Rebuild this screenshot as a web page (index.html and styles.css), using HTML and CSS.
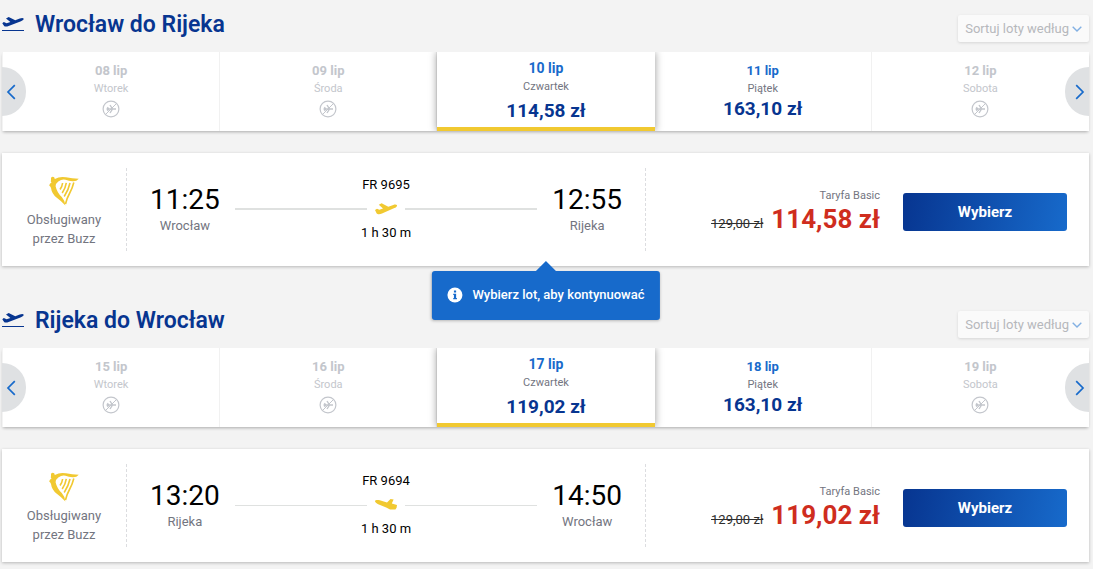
FILE: index.html
```html
<!DOCTYPE html>
<html lang="pl">
<head>
<meta charset="utf-8">
<meta name="viewport" content="width=device-width, initial-scale=1">
<title>Wybór lotów</title>
<link rel="stylesheet" href="styles.css">
</head>
<body>
<svg class="defs" aria-hidden="true">
  <symbol id="takeoff" viewBox="0 0 22 19">
    <path d="M.3 7.2 1.8 6.1 4.6 7.2 8.4 6.1 4 2.4 6.7 1 13.2 4.3 17.8 2.5C19.6 1.8 21.2 1.8 21.6 2.6S20.8 4.6 19 5.3L6.6 10.1C4.6 10.8 2.8 10.8 2.1 10Z"/>
    <path d="M0 14h22v1H0z"/>
  </symbol>
  <symbol id="plane" viewBox="0 0 22 12">
    <path d="M0 7 2 5.7 4.4 6.7 8 5.6 3.8 1.7 6.6.3 13.3 3.7 18.3 1.9C20 1.2 21.6 1.4 22 2.3S21 4.4 19.4 5.1L7 10.6C5 11.4 2.4 11.5 1.7 10.4Z"/>
  </symbol>
  <symbol id="plane-back" viewBox="0 0 22 12">
    <path d="M0 1.9C.4.8 2.8.8 4.8 1.3L12 3.4 15.5.1 18.6.4 16.8 4.5 22 6.1 21.6 8.7 20.4 10.5 15 10.6 11.2 8.4 3.2 5.2C1.2 4.3-.2 3 0 1.9Z"/>
  </symbol>
  <symbol id="no-flight" viewBox="0 0 18 18">
    <circle cx="9" cy="9" r="7.9" fill="none" stroke="currentColor" stroke-width="1.2"/>
    <path d="M3.5 14.5 14.5 3.5" stroke="currentColor"/>
    <path d="M4.5 9h9.5M8 5l2.5 4L8 13M5.3 7.2 6.8 9l-1.5 1.8" fill="none" stroke="currentColor" stroke-width="1.4"/>
  </symbol>
  <symbol id="chevron" viewBox="0 0 10 16">
    <path d="M1.2 1.2 8 8l-6.8 6.8" fill="none" stroke="currentColor" stroke-width="1.7"/>
  </symbol>
  <symbol id="chevron-down" viewBox="0 0 10 6">
    <path d="M.7.7 5 5 9.3.7" fill="none" stroke="currentColor" stroke-width="1.4"/>
  </symbol>
  <symbol id="harp" viewBox="0 0 30 30">
    <path d="M2 1.8Q3.5.1 5.2 1.3L5.8 3Q11 0 17 1.3T29.8 2.7Q27.3 5.6 23.5 5.2T16.5 3.7T9.3 5.4Q6.6 7.4 6.6 10.2 8 16.5 12.8 21 15.8 24.3 16.4 29.5 12 24.8 7.5 21.5 2.8 17.8 2 12 1.8 10.5.2 9.5.5 7.5 2.5 6.4 1.2 5 2 4.3Z"/>
    <path d="M11 13.5Q13.2 10.5 13.6 7M13.2 17Q16.5 12 17.3 6.8M15.2 20.5Q19.5 14 21 7M16.5 28Q17.5 23 20.5 17.5T24.8 6.5" fill="none" stroke="currentColor" stroke-width="1.6"/>
  </symbol>
</svg>

<main class="page">
  <section class="journey">
    <header class="journey-head">
      <h2 class="journey-title"><svg class="title-icon" aria-hidden="true"><use href="#takeoff"/></svg>Wrocław do Rijeka</h2>
      <button class="sort" type="button">Sortuj loty według<svg class="sort-icon" aria-hidden="true"><use href="#chevron-down"/></svg></button>
    </header>
    <div class="carousel">
      <div class="days">
        <button class="day" type="button" disabled><span class="date">08 lip</span><span class="weekday">Wtorek</span><svg class="none-icon" aria-hidden="true"><use href="#no-flight"/></svg></button>
        <button class="day" type="button" disabled><span class="date">09 lip</span><span class="weekday">Środa</span><svg class="none-icon" aria-hidden="true"><use href="#no-flight"/></svg></button>
        <button class="day selected" type="button" aria-pressed="true"><span class="date">10 lip</span><span class="weekday">Czwartek</span><span class="day-price">114,58 zł</span></button>
        <button class="day" type="button"><span class="date">11 lip</span><span class="weekday">Piątek</span><span class="day-price">163,10 zł</span></button>
        <button class="day" type="button" disabled><span class="date">12 lip</span><span class="weekday">Sobota</span><svg class="none-icon" aria-hidden="true"><use href="#no-flight"/></svg></button>
      </div>
      <button class="arrow prev" type="button" aria-label="Poprzednie dni"><svg class="arrow-icon" aria-hidden="true"><use href="#chevron"/></svg></button>
      <button class="arrow next" type="button" aria-label="Następne dni"><svg class="arrow-icon" aria-hidden="true"><use href="#chevron"/></svg></button>
    </div>
    <article class="flight">
      <div class="carrier"><svg class="harp" aria-hidden="true"><use href="#harp"/></svg><span>Obsługiwany<br>przez Buzz</span></div>
      <div class="route">
        <div class="stop"><span class="time">11:25</span><span class="city">Wrocław</span></div>
        <div class="leg">
          <span>FR 9695</span>
          <div class="track"><svg class="plane" aria-hidden="true"><use href="#plane"/></svg></div>
          <span>1 h 30 m</span>
        </div>
        <div class="stop"><span class="time">12:55</span><span class="city">Rijeka</span></div>
      </div>
      <div class="fare">
        <div class="price-box"><span class="fare-name">Taryfa Basic</span><div class="prices"><s class="old-price">129,00 zł</s><strong class="price">114,58 zł</strong></div></div>
        <button class="choose" type="button">Wybierz</button>
      </div>
      <div class="tooltip" role="status"><svg class="info" viewBox="0 0 16 16" aria-hidden="true"><circle cx="8" cy="8" r="7.5" fill="#fff"/><path d="M7 3.5h2.2v2H7zM6.3 6.8h2.9v4.3h.8v1.2H6.3v-1.2H7V8h-.7z" fill="#176acb"/></svg>Wybierz lot, aby kontynuować</div>
    </article>
  </section>

  <section class="journey">
    <header class="journey-head">
      <h2 class="journey-title"><svg class="title-icon" aria-hidden="true"><use href="#takeoff"/></svg>Rijeka do Wrocław</h2>
      <button class="sort" type="button">Sortuj loty według<svg class="sort-icon" aria-hidden="true"><use href="#chevron-down"/></svg></button>
    </header>
    <div class="carousel">
      <div class="days">
        <button class="day" type="button" disabled><span class="date">15 lip</span><span class="weekday">Wtorek</span><svg class="none-icon" aria-hidden="true"><use href="#no-flight"/></svg></button>
        <button class="day" type="button" disabled><span class="date">16 lip</span><span class="weekday">Środa</span><svg class="none-icon" aria-hidden="true"><use href="#no-flight"/></svg></button>
        <button class="day selected" type="button" aria-pressed="true"><span class="date">17 lip</span><span class="weekday">Czwartek</span><span class="day-price">119,02 zł</span></button>
        <button class="day" type="button"><span class="date">18 lip</span><span class="weekday">Piątek</span><span class="day-price">163,10 zł</span></button>
        <button class="day" type="button" disabled><span class="date">19 lip</span><span class="weekday">Sobota</span><svg class="none-icon" aria-hidden="true"><use href="#no-flight"/></svg></button>
      </div>
      <button class="arrow prev" type="button" aria-label="Poprzednie dni"><svg class="arrow-icon" aria-hidden="true"><use href="#chevron"/></svg></button>
      <button class="arrow next" type="button" aria-label="Następne dni"><svg class="arrow-icon" aria-hidden="true"><use href="#chevron"/></svg></button>
    </div>
    <article class="flight">
      <div class="carrier"><svg class="harp" aria-hidden="true"><use href="#harp"/></svg><span>Obsługiwany<br>przez Buzz</span></div>
      <div class="route">
        <div class="stop"><span class="time">13:20</span><span class="city">Rijeka</span></div>
        <div class="leg">
          <span>FR 9694</span>
          <div class="track thin"><svg class="plane" aria-hidden="true"><use href="#plane-back"/></svg></div>
          <span>1 h 30 m</span>
        </div>
        <div class="stop"><span class="time">14:50</span><span class="city">Wrocław</span></div>
      </div>
      <div class="fare">
        <div class="price-box"><span class="fare-name">Taryfa Basic</span><div class="prices"><s class="old-price">129,00 zł</s><strong class="price">119,02 zł</strong></div></div>
        <button class="choose" type="button">Wybierz</button>
      </div>
    </article>
  </section>
</main>
</body>
</html>
```
FILE: styles.css
```css
* { box-sizing: border-box; }

body {
  margin: 0;
  background: #f3f3f3;
  color: #000;
  font-family: Roboto, "Liberation Sans", sans-serif;
  font-size: 13px;
}

button {
  margin: 0;
  padding: 0;
  border: 0;
  font: inherit;
  cursor: pointer;
}

svg { display: block; fill: currentColor; flex: none; }

.defs { position: absolute; width: 0; height: 0; }

.page { padding: 0 4px 6px 2px; }

.journey + .journey { margin-top: 30px; }

.journey-head {
  display: flex;
  justify-content: space-between;
  align-items: flex-start;
  padding-bottom: 10px;
}

.journey-title {
  display: flex;
  align-items: center;
  gap: 11px;
  margin: 0;
  padding: 12px 0 0;
  color: #073590;
  font-size: 23px;
  font-weight: 600;
  line-height: 26px;
}

.title-icon { width: 22px; height: 19px; }

.sort {
  display: flex;
  align-items: center;
  gap: 3px;
  height: 27px;
  margin-top: 15px;
  padding: 0 7px;
  border-radius: 2px;
  background: #fafafa;
  box-shadow: 0 1px 3px rgba(0, 0, 0, .12);
  color: #b6b8bc;
}

.sort-icon { width: 10px; height: 6px; color: #82b0e3; }

.carousel {
  position: relative;
  margin-bottom: 22px;
  box-shadow: 0 2px 3px -1px rgba(0, 0, 0, .3);
}

.days {
  display: grid;
  grid-template-columns: repeat(5, 1fr);
  height: 79px;
  margin-left: 1px;
  overflow: hidden;
  background: #fff;
}

.day {
  display: flex;
  flex-direction: column;
  align-items: center;
  padding-top: 10px;
  border-right: 1px solid #f1f1f1;
  background: #fff;
  color: #73757f;
}

.day:last-child { border-right: 0; }

.day:disabled { color: #c3c6cc; cursor: default; }

.date { color: #176acb; font-weight: 700; line-height: 18px; }

.day:disabled .date { color: inherit; }

.weekday { font-size: 11px; line-height: 18px; }

.day-price { color: #073590; font-size: 19px; font-weight: 700; line-height: 22px; }

.none-icon { width: 18px; height: 18px; margin-top: 2px; }

.selected {
  position: relative;
  padding-top: 7px;
  border-right: 0;
  border-bottom: 4px solid #f1c931;
  box-shadow: 0 0 8px rgba(0, 0, 0, .4);
}

.selected .date { font-size: 14px; }

.selected .weekday { padding-top: 1px; }

.selected .day-price { line-height: 30px; }

.arrow {
  position: absolute;
  top: 15px;
  display: flex;
  align-items: center;
  width: 24px;
  height: 49px;
  background: #dfe1e3;
  color: #176acb;
}

.prev { left: 0; padding-left: 4px; border-radius: 0 24px 24px 0; }
.next { right: 0; justify-content: flex-end; padding-right: 4px; border-radius: 24px 0 0 24px; }
.arrow-icon { width: 10px; height: 16px; }
.prev .arrow-icon { transform: scaleX(-1); }

.flight {
  position: relative;
  display: flex;
  padding: 15px 22px 15px 0;
  background: #fff;
  box-shadow: 0 1px 3px rgba(0, 0, 0, .25);
}

.carrier {
  display: flex;
  flex-direction: column;
  align-items: center;
  gap: 4px;
  width: 125px;
  min-height: 83px;
  padding-top: 8px;
  border-right: 1px dashed #dcdde0;
  color: #73757f;
  line-height: 19px;
  text-align: center;
}

.harp { width: 30px; height: 30px; color: #f1c931; }

.route {
  display: flex;
  flex: 1;
  gap: 15px;
  padding: 0 23px;
  border-right: 1px dashed #dcdde0;
}

.stop { display: flex; flex-direction: column; align-items: center; padding-top: 14px; }
.time { font-size: 28px; line-height: 35px; }
.city { color: #73757f; line-height: 18px; }

.leg {
  display: flex;
  flex: 1;
  flex-direction: column;
  align-items: center;
  gap: 8px;
  padding-top: 9px;
  line-height: 16px;
}

.track { display: flex; align-items: center; gap: 8px; align-self: stretch; height: 16px; }
.track::before, .track::after { content: ""; flex: 1; height: 2px; background: #dfe1e0; }
.track.thin::before, .track.thin::after { height: 1px; }
.plane { width: 22px; height: 12px; color: #f1c931; }

.fare { display: flex; justify-content: flex-end; align-items: flex-start; gap: 23px; width: 421px; padding-top: 18px; }
.price-box { display: flex; flex-direction: column; align-items: flex-end; }
.fare-name { padding-top: 1px; color: #73757f; font-size: 11px; line-height: 18px; }
.prices { display: flex; align-items: baseline; gap: 8px; line-height: 28px; }
.old-price { color: #2e2e2e; }
.price { color: #cf2d1e; font-size: 26px; }

.choose {
  width: 164px;
  height: 38px;
  margin-top: 7px;
  border-radius: 3px;
  background: linear-gradient(100deg, #073590, #176acb);
  color: #fff;
  font-size: 15px;
  font-weight: 700;
}

.tooltip {
  position: absolute;
  z-index: 1;
  top: calc(100% + 5px);
  left: 50%;
  display: flex;
  align-items: center;
  gap: 10px;
  height: 49px;
  padding: 0 15px 2px;
  border-radius: 3px;
  background: #176acb;
  box-shadow: 0 1px 3px rgba(0, 0, 0, .25);
  color: #fff;
  font-weight: 500;
  white-space: nowrap;
  transform: translateX(-50%);
}

.tooltip::before {
  content: "";
  position: absolute;
  bottom: 100%;
  left: 50%;
  margin-left: -10px;
  border: 10px solid transparent;
  border-top: 0;
  border-bottom-color: #176acb;
}

.info { width: 16px; height: 16px; }
```
